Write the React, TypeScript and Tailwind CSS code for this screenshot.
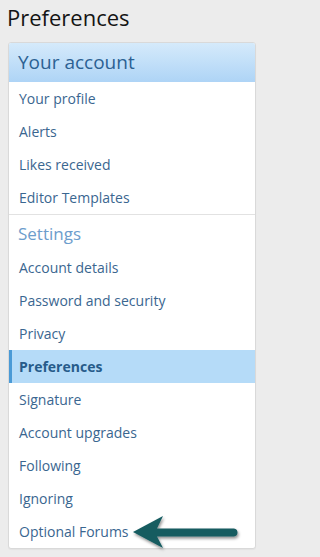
import React from 'react';

const accountLinks = ['Your profile', 'Alerts', 'Likes received', 'Editor Templates'];

const settingsLinks = [
  'Account details',
  'Password and security',
  'Privacy',
  'Preferences',
  'Signature',
  'Account upgrades',
  'Following',
  'Ignoring',
  'Optional Forums',
];

const NavRow: React.FC<{ label: string; active?: boolean }> = ({ label, active }) => (
  <div
    className={`flex h-[33px] items-center text-[14px] ${
      active
        ? 'border-l-[3px] border-[#4a9ad6] bg-[#b5dbf8] pl-[7px] font-bold text-[#275b8a]'
        : 'pl-[10px] text-[#3a6690]'
    }`}
  >
    {label}
  </div>
);

// pointer drawn over the last menu row
const Arrow: React.FC = () => (
  <svg
    className="absolute left-[126px] top-[512px]"
    width="118"
    height="42"
    viewBox="0 0 118 42"
  >
    <defs>
      <filter id="sh" x="-10%" y="-30%" width="130%" height="180%">
        <feDropShadow dx="1" dy="2" stdDeviation="1.6" floodColor="#000" floodOpacity="0.45" />
      </filter>
    </defs>
    <g filter="url(#sh)" fill="#155b60">
      <path d="M7 20 L37 4 L31 16.5 L108 16.5 Q111.5 17 111.5 20.5 Q111.5 24 108 24.5 L31 24.5 L37 36 Z" />
    </g>
  </svg>
);

export default function App() {
  return (
    <div
      className="min-h-[557px] bg-[#ececec]"
      style={{ fontFamily: '"Open Sans", "Noto Sans", sans-serif' }}
    >
      <div className="relative w-[264px] px-[8px]">
        <h1 className="-ml-[1px] pt-[1px] text-[22px] leading-[33px] text-[#141414]">Preferences</h1>
        <div className="mt-[8px] overflow-hidden rounded-[3px] border border-[#d9d9d9] bg-white shadow-[0_1px_1px_rgba(0,0,0,0.04)]">
          <div className="flex h-[39px] items-center bg-gradient-to-b from-[#d5eafb] to-[#aed4f6] pl-[9px] text-[19px] text-[#2c6193]">
            Your account
          </div>
          {accountLinks.map((l) => (
            <NavRow key={l} label={l} />
          ))}
          <div className="flex h-[37px] items-center border-t border-[#e2e2e2] pl-[9px] pt-[1px] text-[17px] text-[#6c9dcc]">
            Settings
          </div>
          {settingsLinks.map((l) => (
            <NavRow key={l} label={l} active={l === 'Preferences'} />
          ))}
        </div>
        <Arrow />
      </div>
    </div>
  );
}
